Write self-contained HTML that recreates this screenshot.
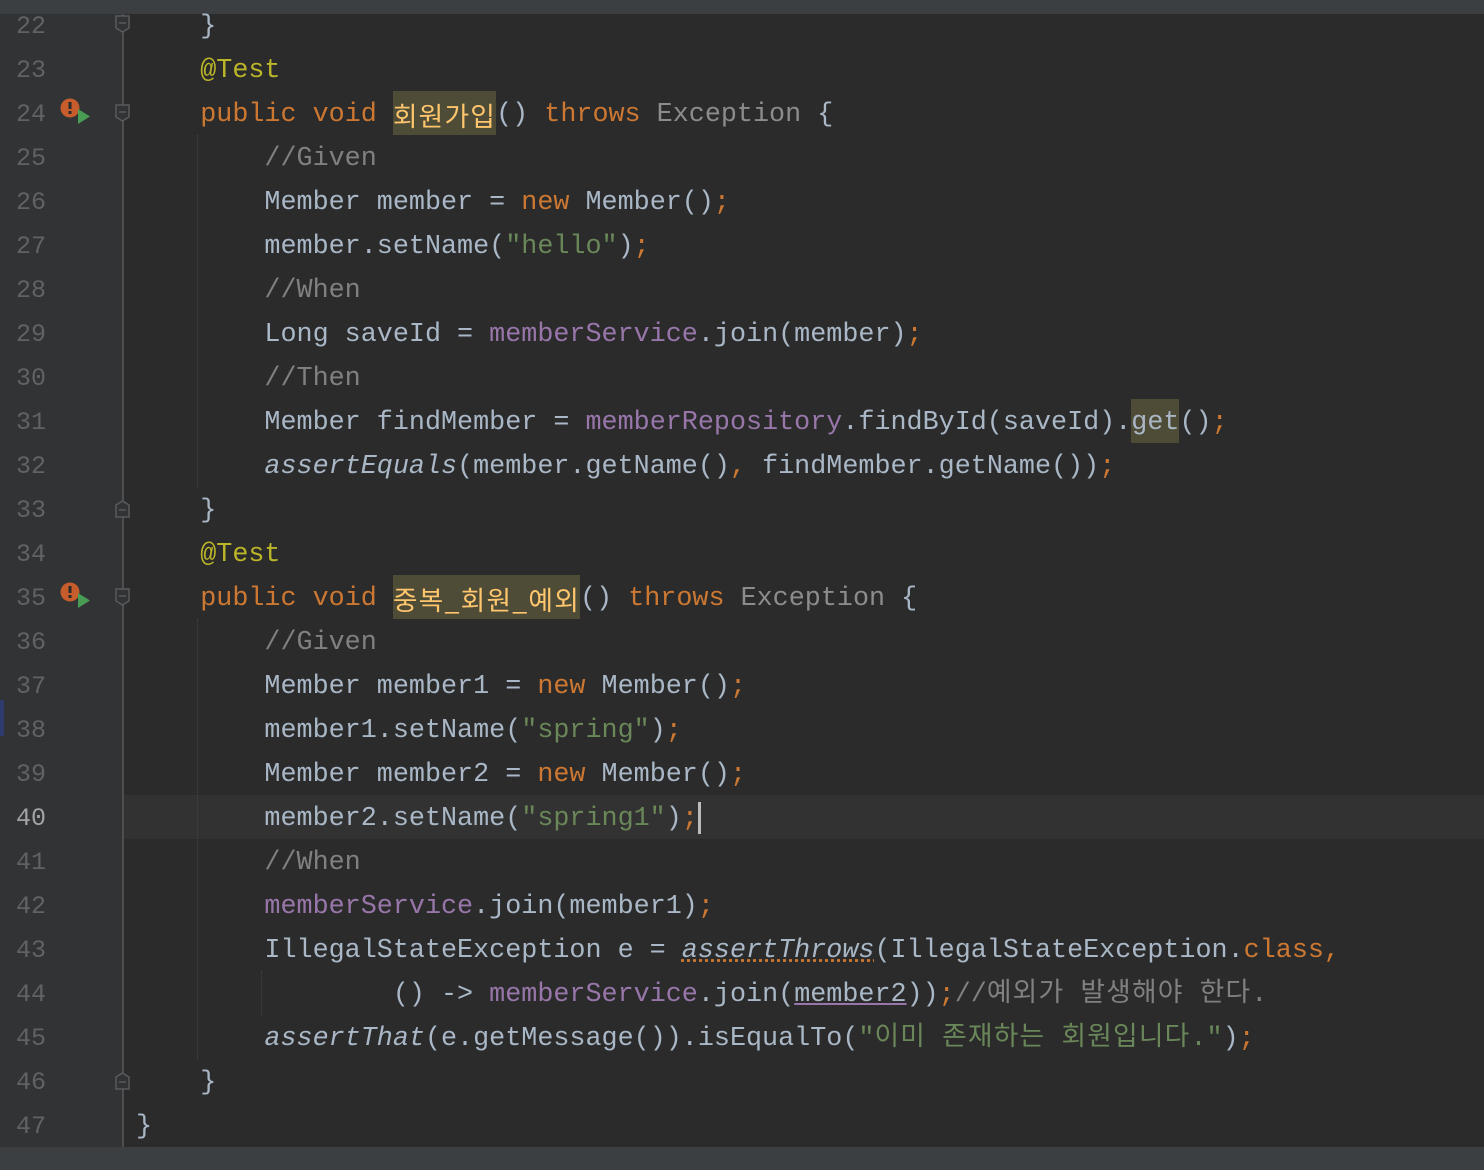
<!DOCTYPE html>
<html><head><meta charset="utf-8">
<style>
html,body{margin:0;padding:0}
body{width:1484px;height:1170px;background:#2b2b2b;position:relative;overflow:hidden;font-family:"Liberation Mono","Noto Sans CJK KR",monospace;font-size:26.75px;color:#a9b7c6}
.top{position:absolute;left:0;top:0;width:1484px;height:14px;background:#3c3f41}
.bot{position:absolute;left:0;top:1147px;width:1484px;height:23px;background:#3c3f41}
.gut{position:absolute;left:0;top:14px;width:123px;height:1133px;background:#313335}
.fl{position:absolute;left:122px;top:14px;width:2px;height:1133px;background:#4d4e50}
.ln{position:absolute;left:0;width:46px;text-align:right;color:#606366;line-height:44px;font-size:25px;transform:translateY(2px)}
.l{position:absolute;left:136px;white-space:pre;line-height:44px;height:44px}
.l>*:not(.h),.l{}
.tx{position:relative;top:2px}
.k{color:#cc7832}.a{color:#bbb529}.s{color:#6a8759}.c{color:#808080}.f{color:#9876aa}.m{color:#ffc66d}.g{color:#8c8c8c}
.i{font-style:italic}
.h{background:#4e4c36;display:inline-block;height:44px;line-height:48px;vertical-align:top}
.kr{font-family:"Noto Sans CJK KR",sans-serif;letter-spacing:1.2px;line-height:1}
.h.kr{line-height:48px}
.cur{position:absolute;left:124px;top:795px;width:1360px;height:44px;background:#323232}
.ig{position:absolute;width:1px;border-left:1px dotted #444}
.fold{position:absolute;left:115px;width:15px;height:18px}
.run{position:absolute;left:60px}
</style></head><body>
<div class="top"></div>
<div class="gut"></div>
<div class="cur"></div>
<div class="fl"></div>
<div class="bot"></div>
<div class="ig" style="left:197px;top:135px;height:352px"></div>
<div class="ig" style="left:197px;top:619px;height:440px"></div>
<div class="ig" style="left:261px;top:971px;height:44px"></div>
<div style="position:absolute;left:0;top:700px;width:4px;height:36px;background:#2f3b6e"></div>

<svg class="fold" style="top:15px" viewBox="0 0 15 18"><path d="M1 1H14V13L7.5 17L1 13Z" fill="#313335" stroke="#5a5b5d" stroke-width="1.5"/><path d="M4 8H11" stroke="#5a5b5d" stroke-width="1.5"/></svg>
<svg class="fold" style="top:104px" viewBox="0 0 15 18"><path d="M1 1H14V13L7.5 17L1 13Z" fill="#313335" stroke="#5a5b5d" stroke-width="1.5"/><path d="M4 8H11" stroke="#5a5b5d" stroke-width="1.5"/></svg>
<svg class="fold" style="top:500px" viewBox="0 0 15 18"><path d="M1 17H14V5L7.5 1L1 5Z" fill="#313335" stroke="#5a5b5d" stroke-width="1.5"/><path d="M4 10H11" stroke="#5a5b5d" stroke-width="1.5"/></svg>
<svg class="fold" style="top:588px" viewBox="0 0 15 18"><path d="M1 1H14V13L7.5 17L1 13Z" fill="#313335" stroke="#5a5b5d" stroke-width="1.5"/><path d="M4 8H11" stroke="#5a5b5d" stroke-width="1.5"/></svg>
<svg class="fold" style="top:1072px" viewBox="0 0 15 18"><path d="M1 17H14V5L7.5 1L1 5Z" fill="#313335" stroke="#5a5b5d" stroke-width="1.5"/><path d="M4 10H11" stroke="#5a5b5d" stroke-width="1.5"/></svg>

<svg class="run" style="top:97px" width="30" height="30" viewBox="0 0 30 30"><circle cx="10" cy="11" r="9.5" fill="#c75c2c"/><rect x="8.5" y="5" width="3" height="7" fill="#2b2b2b"/><rect x="8.5" y="14" width="3" height="3" fill="#2b2b2b"/><path d="M18 12L30 19.5L18 27Z" fill="#499c54"/></svg>
<svg class="run" style="top:581px" width="30" height="30" viewBox="0 0 30 30"><circle cx="10" cy="11" r="9.5" fill="#c75c2c"/><rect x="8.5" y="5" width="3" height="7" fill="#2b2b2b"/><rect x="8.5" y="14" width="3" height="3" fill="#2b2b2b"/><path d="M18 12L30 19.5L18 27Z" fill="#499c54"/></svg>

<div class="ln" style="top:3px">22</div>
<div class="ln" style="top:47px">23</div>
<div class="ln" style="top:91px">24</div>
<div class="ln" style="top:135px">25</div>
<div class="ln" style="top:179px">26</div>
<div class="ln" style="top:223px">27</div>
<div class="ln" style="top:267px">28</div>
<div class="ln" style="top:311px">29</div>
<div class="ln" style="top:355px">30</div>
<div class="ln" style="top:399px">31</div>
<div class="ln" style="top:443px">32</div>
<div class="ln" style="top:487px">33</div>
<div class="ln" style="top:531px">34</div>
<div class="ln" style="top:575px">35</div>
<div class="ln" style="top:619px">36</div>
<div class="ln" style="top:663px">37</div>
<div class="ln" style="top:707px">38</div>
<div class="ln" style="top:751px">39</div>
<div class="ln" style="top:795px;color:#a4a3a3">40</div>
<div class="ln" style="top:839px">41</div>
<div class="ln" style="top:883px">42</div>
<div class="ln" style="top:927px">43</div>
<div class="ln" style="top:971px">44</div>
<div class="ln" style="top:1015px">45</div>
<div class="ln" style="top:1059px">46</div>
<div class="ln" style="top:1103px">47</div>

<div class="l" style="top:5px">    }</div>
<div class="l" style="top:49px">    <span class="a">@Test</span></div>
<div class="l" style="top:91px;line-height:48px">    <span class="k">public void </span><span class="m h kr">회원가입</span>() <span class="k">throws </span><span class="g">Exception</span> {</div>
<div class="l" style="top:137px">        <span class="c">//Given</span></div>
<div class="l" style="top:181px">        Member member = <span class="k">new </span>Member()<span class="k">;</span></div>
<div class="l" style="top:225px">        member.setName(<span class="s">"hello"</span>)<span class="k">;</span></div>
<div class="l" style="top:269px">        <span class="c">//When</span></div>
<div class="l" style="top:313px">        Long saveId = <span class="f">memberService</span>.join(member)<span class="k">;</span></div>
<div class="l" style="top:357px">        <span class="c">//Then</span></div>
<div class="l" style="top:399px;line-height:48px">        Member findMember = <span class="f">memberRepository</span>.findById(saveId).<span class="h">get</span>()<span class="k">;</span></div>
<div class="l" style="top:445px">        <span class="i">assertEquals</span>(member.getName()<span class="k">, </span>findMember.getName())<span class="k">;</span></div>
<div class="l" style="top:489px">    }</div>
<div class="l" style="top:533px">    <span class="a">@Test</span></div>
<div class="l" style="top:575px;line-height:48px">    <span class="k">public void </span><span class="m h kr">중복_회원_예외</span>() <span class="k">throws </span><span class="g">Exception</span> {</div>
<div class="l" style="top:621px">        <span class="c">//Given</span></div>
<div class="l" style="top:665px">        Member member1 = <span class="k">new </span>Member()<span class="k">;</span></div>
<div class="l" style="top:709px">        member1.setName(<span class="s">"spring"</span>)<span class="k">;</span></div>
<div class="l" style="top:753px">        Member member2 = <span class="k">new </span>Member()<span class="k">;</span></div>
<div class="l" style="top:797px">        member2.setName(<span class="s">"spring1"</span>)<span class="k">;</span><span style="display:inline-block;width:3px;height:32px;background:#bbbbbb;vertical-align:middle"></span></div>
<div class="l" style="top:841px">        <span class="c">//When</span></div>
<div class="l" style="top:885px">        <span class="f">memberService</span>.join(member1)<span class="k">;</span></div>
<div class="l" style="top:929px">        IllegalStateException e = <span class="i" style="text-decoration:underline dotted #cc7832">assertThrows</span>(IllegalStateException.<span class="k">class,</span></div>
<div class="l" style="top:973px">                () -&gt; <span class="f">memberService</span>.join(<span style="text-decoration:underline #9876aa">member2</span>))<span class="k">;</span><span class="c">//<span class="kr">예외가</span> <span class="kr">발생해야</span> <span class="kr">한다</span>.</span></div>
<div class="l" style="top:1017px">        <span class="i">assertThat</span>(e.getMessage()).isEqualTo(<span class="s">"<span class="kr">이미</span> <span class="kr">존재하는</span> <span class="kr">회원입니다</span>."</span>)<span class="k">;</span></div>
<div class="l" style="top:1061px">    }</div>
<div class="l" style="top:1105px">}</div>
</body></html>
